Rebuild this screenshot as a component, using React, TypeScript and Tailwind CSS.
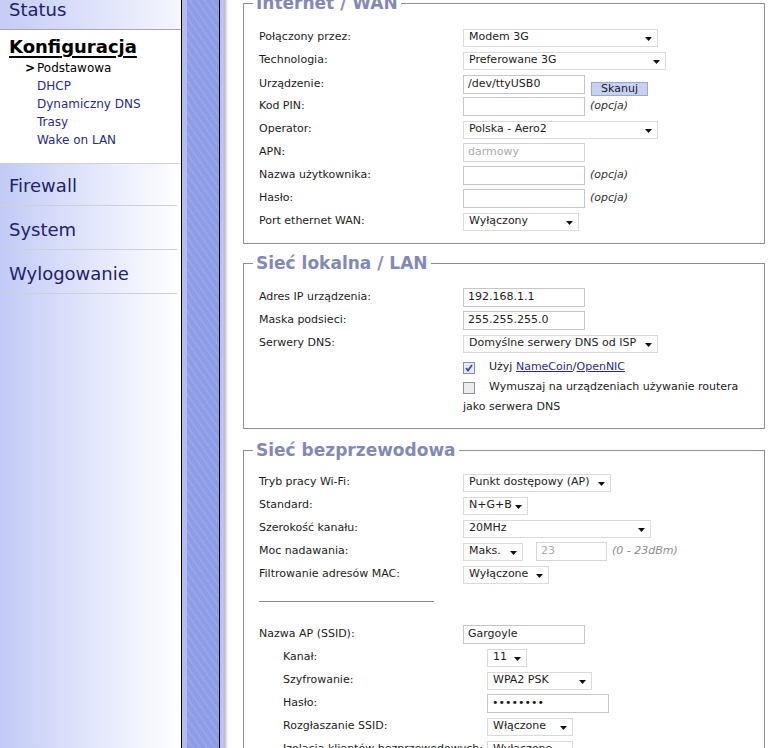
import React from "react";

function Arrow() {
  return (
    <svg width="7" height="4" viewBox="0 0 7 4" className="mt-[3px] shrink-0">
      <path d="M0 0h7L3.5 4z" fill="#111" />
    </svg>
  );
}

function Select({ value, w }: { value: string; w: string }) {
  return (
    <div
      className={`${w} h-[18px] border border-[#dadada] bg-white flex items-center justify-between pl-[5px] pr-[5px] whitespace-nowrap`}
    >
      <span>{value}</span>
      <Arrow />
    </div>
  );
}

function Input({
  value = "",
  w = "w-[122px]",
  muted = false,
}: {
  value?: string;
  w?: string;
  muted?: boolean;
}) {
  return (
    <div
      className={`${w} h-[19px] border bg-white pl-[4px] flex items-center ${
        muted ? "border-[#d6d6d6] text-[#aaaaaa]" : "border-[#c6c6c6]"
      }`}
    >
      {value}
    </div>
  );
}

function Opt() {
  return <span className="ml-[5px] italic text-[#333]">(opcja)</span>;
}

function Row({ label, children }: { label: string; children?: React.ReactNode }) {
  return (
    <div className="grid grid-cols-[204px_1fr] h-[23px] items-center">
      <span className="whitespace-nowrap">{label}</span>
      <div className="flex items-center">{children}</div>
    </div>
  );
}

function Check({ on }: { on?: boolean }) {
  return (
    <svg width="12" height="12" viewBox="0 0 12 12" className="shrink-0">
      <rect x="0.5" y="0.5" width="11" height="11" fill={on ? "#e6e9f6" : "#ececec"} stroke="#8d8f9c" />
      {on && <path d="M3 6l2 2.5L9 3" fill="none" stroke="#3b4a9a" strokeWidth="1.8" />}
    </svg>
  );
}

function Box({
  title,
  className = "",
  inner = "pt-[12px]",
  children,
}: {
  title: string;
  className?: string;
  inner?: string;
  children: React.ReactNode;
}) {
  return (
    <fieldset className={`border border-[#8e8e9c] ${className}`}>
      <legend className="ml-[9px] px-[3px] text-[17px] leading-[22px] font-bold text-[#8389b6]">
        {title}
      </legend>
      <div className={`pl-[15px] pb-[10px] ${inner}`}>{children}</div>
    </fieldset>
  );
}

function Sidebar() {
  const subs = ["Podstawowa", "DHCP", "Dynamiczny DNS", "Trasy", "Wake on LAN"];
  return (
    <aside className="w-[181px] shrink-0 bg-gradient-to-r from-[#c2caf6] via-[#e2e6fb] to-white text-[#22226a]">
      <div className="-mt-[14px] h-[44px] pt-[4px] flex items-center pl-[9px] text-[18px] border-b border-[#a8a8b0] shadow-[0_1px_2px_rgba(0,0,0,0.15)] bg-gradient-to-r from-[#c5ccf5] to-[#f5f6fd]">
        Status
      </div>
      <div className="bg-white pt-[6px] pb-[14px] border-b border-[#cfcfd6]">
        <div className="pl-[9px] text-[18px] leading-[22px] font-bold underline decoration-2 underline-offset-[3px] text-black">
          Konfiguracja
        </div>
        <ul className="mt-[1px] pl-[25px] text-[12px] leading-[18px]">
          {subs.map((s, i) => (
            <li key={s} className={i === 0 ? "text-black" : "text-[#2a2a86]"}>
              <span className="inline-block w-[12px] font-bold">{i === 0 ? ">" : ""}</span>
              {s}
            </li>
          ))}
        </ul>
      </div>
      <div className="h-[42px] pt-[1px] mr-[4px] flex items-center pl-[9px] text-[18px] border-b border-[#cfcfd6]">
        Firewall
      </div>
      <div className="h-[44px] pt-[4px] mr-[4px] flex items-center pl-[9px] text-[18px] border-b border-[#cfcfd6]">
        System
      </div>
      <div className="h-[44px] pt-[4px] mr-[4px] flex items-center pl-[9px] text-[18px] border-b border-[#cfcfd6]">
        Wylogowanie
      </div>
    </aside>
  );
}

function Divider() {
  return (
    <div className="flex shrink-0">
      <div className="w-px bg-black" />
      <div className="w-[5px] bg-[#b3bcf1]" />
      <div className="w-[32px] bg-[#8e9ce8] bg-[repeating-linear-gradient(55deg,transparent_0_4px,rgba(255,255,255,0.09)_4px_6px)]" />
      <div className="w-px bg-black" />
      <div className="w-[4px] bg-[#bcc3f3]" />
      <div className="w-[4px] bg-gradient-to-r from-[#b6b6be] to-white" />
    </div>
  );
}

export default function App() {
  return (
    <div className="h-[748px] overflow-hidden flex bg-white font-['DejaVu_Sans',Verdana,sans-serif] text-[11px] text-[#1c1c1c]">
      <Sidebar />
      <Divider />
      <main className="flex-1 pl-[15px] pr-[10px]">
        <Box title="Internet / WAN" className="-mt-[8px]">
          <Row label="Połączony przez:">
            <Select value="Modem 3G" w="w-[195px]" />
          </Row>
          <Row label="Technologia:">
            <Select value="Preferowane 3G" w="w-[203px]" />
          </Row>
          <Row label="Urządzenie:">
            <Input value="/dev/ttyUSB0" />
            <button className="ml-[6px] mt-[10px] w-[57px] h-[14px] leading-[12px] bg-[#c6d0f1] border border-[#9ba6d2] text-[11px] text-[#1c1c1c]">
              Skanuj
            </button>
          </Row>
          <Row label="Kod PIN:">
            <Input />
            <Opt />
          </Row>
          <Row label="Operator:">
            <Select value="Polska - Aero2" w="w-[195px]" />
          </Row>
          <Row label="APN:">
            <Input value="darmowy" muted />
          </Row>
          <Row label="Nazwa użytkownika:">
            <Input />
            <Opt />
          </Row>
          <Row label="Hasło:">
            <Input />
            <Opt />
          </Row>
          <Row label="Port ethernet WAN:">
            <Select value="Wyłączony" w="w-[116px]" />
          </Row>
        </Box>

        <Box title="Sieć lokalna / LAN" className="mt-[8px]">
          <Row label="Adres IP urządzenia:">
            <Input value="192.168.1.1" />
          </Row>
          <Row label="Maska podsieci:">
            <Input value="255.255.255.0" />
          </Row>
          <Row label="Serwery DNS:">
            <Select value="Domyślne serwery DNS od ISP" w="w-[195px]" />
          </Row>
          <div className="ml-[204px] mt-[2px] h-[21px] flex items-center gap-[14px]">
            <Check on />
            <span>
              Użyj{" "}
              <a href="#" className="text-[#2b2b88] underline">
                NameCoin
              </a>
              /
              <a href="#" className="text-[#2b2b88] underline">
                OpenNIC
              </a>
            </span>
          </div>
          <div className="ml-[204px] h-[19px] flex items-center gap-[14px]">
            <Check />
            <span>Wymuszaj na urządzeniach używanie routera</span>
          </div>
          <div className="ml-[204px] h-[21px] flex items-center">jako serwera DNS</div>
        </Box>

        <Box title="Sieć bezprzewodowa" className="mt-[10px]" inner="pt-[10px]">
          <Row label="Tryb pracy Wi-Fi:">
            <Select value="Punkt dostępowy (AP)" w="w-[148px]" />
          </Row>
          <Row label="Standard:">
            <Select value="N+G+B" w="w-[65px]" />
          </Row>
          <Row label="Szerokość kanału:">
            <Select value="20MHz" w="w-[188px]" />
          </Row>
          <Row label="Moc nadawania:">
            <Select value="Maks." w="w-[60px]" />
            <div className="ml-[13px]">
              <Input value="23" w="w-[71px]" muted />
            </div>
            <span className="ml-[5px] italic text-[#8c8c8c]">(0 - 23dBm)</span>
          </Row>
          <Row label="Filtrowanie adresów MAC:">
            <Select value="Wyłączone" w="w-[86px]" />
          </Row>
          <div className="mt-[15px] h-px w-[175px] bg-[#8a8a8a]" />
          <div className="mt-[21px]">
            <Row label="Nazwa AP (SSID):">
              <Input value="Gargoyle" />
            </Row>
          </div>
          <div className="pl-[24px]">
            <Row label="Kanał:">
              <Select value="11" w="w-[40px]" />
            </Row>
            <Row label="Szyfrowanie:">
              <Select value="WPA2 PSK" w="w-[105px]" />
            </Row>
            <Row label="Hasło:">
              <Input value="••••••••" />
            </Row>
            <Row label="Rozgłaszanie SSID:">
              <Select value="Włączone" w="w-[86px]" />
            </Row>
            <Row label="Izolacja klientów bezprzewodowych:">
              <Select value="Wyłączone" w="w-[86px]" />
            </Row>
          </div>
        </Box>
      </main>
    </div>
  );
}
